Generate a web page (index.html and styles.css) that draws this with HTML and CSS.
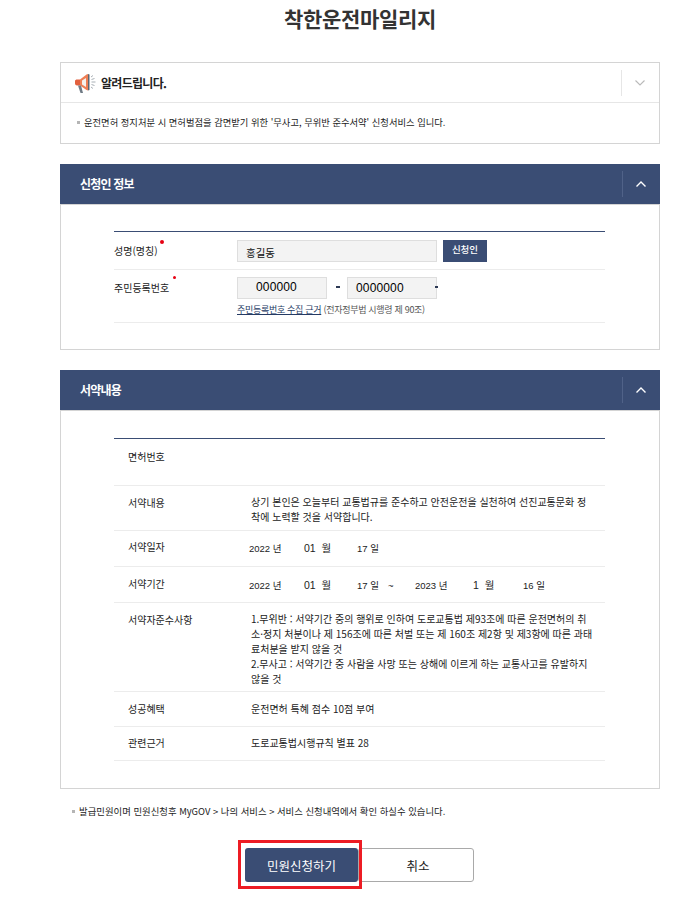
FILE: index.html
```html
<!DOCTYPE html>
<html lang="ko">
<head>
<meta charset="utf-8">
<title>착한운전마일리지</title>
<link rel="stylesheet" href="styles.css">
</head>
<body>
<main class="page">
  <h1 class="title">착한운전마일리지</h1>

  <section class="notice">
    <div class="notice-head">
      <svg class="mega" width="22" height="22" viewBox="0 0 22 22">
        <path d="M1 9 C1 8 2 7.500 3 7.500 L6 7.500 L6 13.500 L3 13.500 C2 13.500 1 12.500 1 11.500 Z" fill="#e2603e"/>
        <path d="M6 7.500 L12.500 2.500 L14 2 L14 18.500 L12.500 18 L6 13.500 Z" fill="#ee7e54"/>
        <path d="M8 8.500 L12 6 L12 15 L8 12.500 Z" fill="#f6f1ec"/>
        <path d="M14 2 L15.500 2.500 L15.500 18 L14 18.500 Z" fill="#5b6670"/>
        <path d="M4 13.500 L7 13.500 L9 21 L6.500 21 Z" fill="#6f7a84"/>
        <path d="M17 5 L19 3.500 M17.500 10 L21.500 10 M17 15 L19 16.500 M17.500 7.500 L20.500 6.500 M17.500 12.500 L20.500 13.500" stroke="#a9b0b6" stroke-width="1" fill="none"/>
      </svg>
      <strong class="notice-title">알려드립니다.</strong>
      <span class="toggle toggle-light">
        <svg width="10" height="6" viewBox="0 0 10 6"><path d="M0.500 0.500 L5 5 L9.500 0.500" fill="none" stroke="#b9b9b9" stroke-width="1.100"/></svg>
      </span>
    </div>
    <p class="notice-body"><i class="sq"></i>운전면허 정지처분 시 면허벌점을 감면받기 위한 '무사고, 무위반 준수서약' 신청서비스 입니다.</p>
  </section>

  <section class="panel panel-one">
    <header class="bar">
      <h2>신청인 정보</h2>
      <span class="toggle">
        <svg width="10" height="6" viewBox="0 0 10 6"><path d="M0.500 5.500 L5 1 L9.500 5.500" fill="none" stroke="#fff" stroke-width="1.400"/></svg>
      </span>
    </header>
    <div class="panel-body body-one">
      <div class="table">
        <div class="row row-name">
          <div class="label">성명(명칭)<i class="req req-a"></i></div>
          <div class="value input-line">
            <span class="input input-name">홍길동</span>
            <span class="mini-btn">신청인</span>
          </div>
        </div>
        <div class="row row-id">
          <div class="label">주민등록번호<i class="req req-b"></i></div>
          <div class="value">
            <div class="input-line">
              <span class="input input-id input-front">000000</span>
              <span class="dash"></span>
              <span class="input input-id input-back">0000000<b class="dash-end"></b></span>
            </div>
            <p class="legal"><a href="#">주민등록번호 수집 근거</a> (전자정부법 시행령 제 90조)</p>
          </div>
        </div>
      </div>
    </div>
  </section>

  <section class="panel panel-two">
    <header class="bar">
      <h2>서약내용</h2>
      <span class="toggle">
        <svg width="10" height="6" viewBox="0 0 10 6"><path d="M0.500 5.500 L5 1 L9.500 5.500" fill="none" stroke="#fff" stroke-width="1.400"/></svg>
      </span>
    </header>
    <div class="panel-body body-two">
      <div class="table">
        <div class="row r-license"><div class="label">면허번호</div><div class="value"></div></div>
        <div class="row r-pledge"><div class="label">서약내용</div><div class="value">상기 본인은 오늘부터 교통법규를 준수하고 안전운전을 실천하여 선진교통문화 정착에 노력할 것을 서약합니다.</div></div>
        <div class="row r-date"><div class="label">서약일자</div>
          <div class="value dates"><span class="d1">2022 년</span><span class="d2">01&nbsp; 월</span><span class="d3">17 일</span></div></div>
        <div class="row r-date r-period"><div class="label">서약기간</div>
          <div class="value dates"><span class="d1">2022 년</span><span class="d2">01&nbsp; 월</span><span class="d3">17 일</span><span class="d4">~</span><span class="d5">2023 년</span><span class="d6">1&nbsp; 월</span><span class="d7">16 일</span></div></div>
        <div class="row r-rules"><div class="label">서약자준수사항</div><div class="value">1.무위반 : 서약기간 중의 행위로 인하여 도로교통법 제93조에 따른 운전면허의 취소·정지 처분이나 제 156조에 따른 처벌 또는 제 160조 제2항 및 제3항에 따른 과태료처분을 받지 않을 것<br>2.무사고 : 서약기간 중 사람을 사망 또는 상해에 이르게 하는 교통사고를 유발하지 않을 것</div></div>
        <div class="row r-short"><div class="label">성공혜택</div><div class="value">운전면허 특혜 점수 10점 부여</div></div>
        <div class="row r-short r-last"><div class="label">관련근거</div><div class="value">도로교통법시행규칙 별표 28</div></div>
      </div>
    </div>
  </section>

  <p class="foot"><i class="sq"></i>발급민원이며 민원신청후 MyGOV &gt; 나의 서비스 &gt; 서비스 신청내역에서 확인 하실수 있습니다.</p>

  <div class="actions">
    <span class="highlight"><a class="btn btn-primary" href="#">민원신청하기</a></span>
    <a class="btn btn-cancel" href="#">취소</a>
  </div>
</main>
</body>
</html>
```
FILE: styles.css
```css
* { box-sizing: border-box; }
html, body { margin: 0; padding: 0; background: #fff; }
body {
  font-family: "Noto Sans CJK KR", "Liberation Sans", sans-serif;
  color: #222;
  font-size: 10px;
}
.page { width: 600px; margin-left: 60px; height: 899px; overflow: hidden; }
.title {
  margin: 0;
  height: 62px;
  padding-top: 3px;
  text-align: center;
  font-size: 21px;
  line-height: 30px;
  font-weight: 700;
  letter-spacing: -0.3px;
  color: #333;
}
.notice { border: 1px solid #d4d4d4; height: 82px; }
.notice-head {
  display: flex;
  align-items: center;
  height: 40px;
  padding-left: 13px;
  border-bottom: 1px solid #e6e6e6;
}
.mega { flex: none; }
.notice-title { margin: 0 0 1px 5px; font-size: 12px; font-weight: 700; letter-spacing: -0.7px; color: #222; }
.toggle {
  margin-left: auto;
  width: 38px;
  height: 26px;
  display: flex;
  align-items: center;
  justify-content: center;
  padding-right: 2px;
  border-left: 1px solid #506288;
}
.toggle-light { border-left-color: #e6e6e6; }
.notice-body { margin: 0; padding: 12px 0 0 16px; font-size: 9.300px; line-height: 14px; color: #222; display: flex; align-items: center; white-space: nowrap; }
.sq { display: inline-block; width: 3px; height: 3px; background: #b5b5b5; margin-right: 4px; flex: none; }
.panel-one { margin-top: 20px; }
.panel-two { margin-top: 20px; }
.bar {
  height: 40px;
  background: #3a4d74;
  color: #fff;
  display: flex;
  align-items: center;
  padding-left: 20px;
}
.bar h2 { margin: 0 0 2px; font-size: 12px; font-weight: 700; letter-spacing: -0.8px; }
.panel-body { border: 1px solid #d4d4d4; padding: 27px 54px 0 53px; }
.body-one { height: 146px; padding-top: 26px; }
.body-two { height: 379px; }
.table { border-top: 1px solid #3a4d74; }
.row {
  display: grid;
  grid-template-columns: 123px 1fr;
  align-items: start;
  border-bottom: 1px solid #ececec;
  font-size: 10px;
  line-height: 15px;
  color: #222;
}
.label { position: relative; }
.row-name { height: 38px; padding-top: 8px; }
.row-name .label { padding-top: 3px; }
.row-id { height: 53px; padding-top: 7px; }
.row-id .label { padding-top: 3px; }
.req { position: absolute; background: #e60012; border-radius: 50%; }
.req-a { left: 46px; top: 0; width: 4px; height: 4px; }
.req-b { left: 59px; top: -1px; width: 3px; height: 3px; }
.input-line { display: flex; align-items: center; }
.input {
  display: flex;
  align-items: center;
  height: 22px;
  background: #f3f3f3;
  border: 1px solid #dedede;
  color: #111;
}
.input-name { width: 200px; padding: 2px 0 0 8px; font-size: 10.500px; }
.mini-btn {
  margin-left: 6px;
  width: 44px;
  height: 22px;
  padding-bottom: 3px;
  background: #3a4d74;
  color: #fff;
  font-size: 9.500px;
  font-weight: 500;
  display: flex;
  align-items: center;
  justify-content: center;
}
.input-id { width: 90px; font-family: "Liberation Sans", sans-serif; font-size: 12px; letter-spacing: 0.15px; color: #000; }
.input-front { padding: 0 0 2px 18px; }
.input-back { padding: 0 0 0 8px; position: relative; }
.dash { display: block; flex: none; width: 4px; height: 2px; margin: 0 7px 2px 9px; background: #2d3a55; }
.dash-end { position: absolute; right: -2px; top: 8px; width: 3px; height: 2px; background: #2d3a55; }
.legal { margin: 4px 0 0; font-size: 9px; line-height: 13px; letter-spacing: -0.3px; color: #555; }
.legal a { color: #253a63; text-decoration: underline; }
.value { min-width: 0; }
.r-license { height: 47px; padding: 10px 0 0 14px; }
.r-pledge { height: 45px; padding: 8px 0 0 14px; }
.r-pledge .label { padding-top: 1px; }
.r-date { height: 36px; padding: 8px 0 0 14px; }
.r-period { padding-top: 9px; }
.r-rules { height: 89px; padding: 8px 0 0 14px; }
.r-rules .label { padding-top: 1px; }
.r-short { height: 35px; padding: 9px 0 0 14px; }
.r-last { height: 34px; padding-top: 8px; }
.r-license .value, .r-pledge .value, .r-rules .value, .r-short .value { padding-right: 10px; }
.dates { font-family: "Liberation Sans", "Noto Sans CJK KR", sans-serif; font-size: 9.500px; display: flex; padding-top: 2px; }
.dates span { flex: none; white-space: nowrap; }
.d1 { width: 55px; margin-left: -2px; }
.d2 { width: 53px; font-size: 10.500px; }
.d3 { width: 31px; }
.d4 { width: 27px; }
.d5 { width: 58px; }
.d6 { width: 50px; font-size: 10.500px; }
.foot { margin: 15px 0 0 12px; font-size: 9.400px; line-height: 14px; color: #222; display: flex; align-items: center; white-space: nowrap; }
.actions { display: flex; margin-top: 22px; padding-left: 178px; align-items: flex-start; }
.highlight { display: block; flex: none; position: relative; z-index: 1; border: 3px solid #ed1c24; padding: 5px 0 0 4px; width: 124px; height: 49px; }
.btn {
  display: flex;
  align-items: center;
  justify-content: center;
  height: 34px;
  font-size: 12.500px;
  text-decoration: none;
  border-radius: 3px;
}
.btn-primary { width: 113px; background: #3a4d74; color: #fff; }
.btn-cancel { flex: none; width: 116px; height: 34px; margin: 8px 0 0 -4px; padding-left: 4px; background: #fff; color: #222; border: 1px solid #a9a9a9; }
```
